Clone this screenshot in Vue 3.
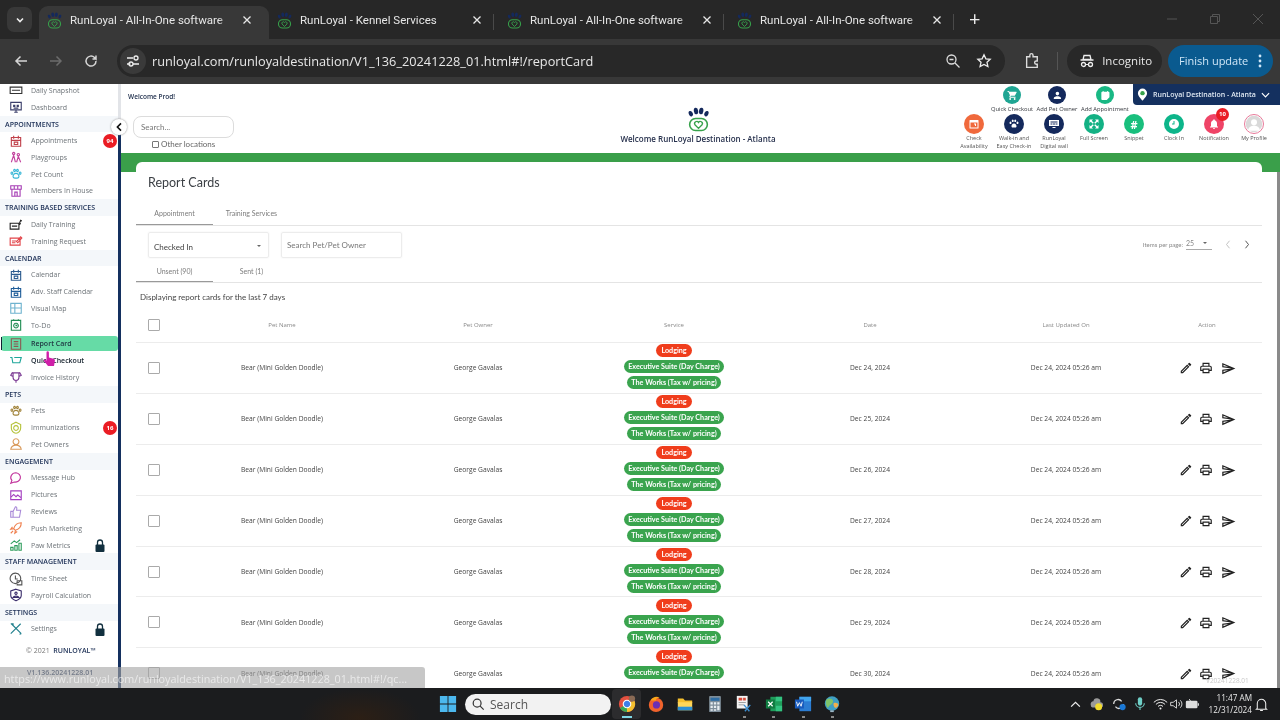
<template>
  <div class="screen">
    <svg class="defs" width="0" height="0">
      <symbol id="paw-logo" viewBox="0 0 24 24">
        <ellipse cx="4.6" cy="6.4" rx="1.9" ry="2.7" fill="#14295c" transform="rotate(-25 4.6 6.4)" />
        <ellipse cx="9.6" cy="3.8" rx="2.1" ry="3.2" fill="#14295c" transform="rotate(-8 9.6 3.8)" />
        <ellipse cx="14.6" cy="3.8" rx="2.1" ry="3.2" fill="#14295c" transform="rotate(8 14.6 3.8)" />
        <ellipse cx="19.6" cy="6.4" rx="1.9" ry="2.7" fill="#14295c" transform="rotate(25 19.6 6.4)" />
        <rect x="3.5" y="11" width="17" height="11.5" rx="5.7" fill="none" stroke="#37a24b" stroke-width="1.5" />
        <path d="M12 20.5l-3.4-3.5a2 2 0 0 1 3.4-2.2 2 2 0 0 1 3.4 2.2z" fill="none" stroke="#37a24b" stroke-width="1.3" />
      </symbol>
    </svg>

    <!-- browser tabs -->
    <div class="tabstrip">
      <div class="tabmenu">
        <svg viewBox="0 0 12 12" width="12" height="12"><path d="M3 4.5l3 3 3-3" fill="none" stroke="#eee" stroke-width="1.6" /></svg>
      </div>
      <div v-for="(tab, i) in tabs" :key="i" class="tab" :class="{ active: i === 0, sep: i > 0 }">
        <svg class="favicon"><use href="#paw-logo" /></svg>
        <span class="tab-title">{{ tab }}</span>
        <svg class="tab-x" viewBox="0 0 10 10" width="10" height="10"><path d="M1.5 1.5l7 7M8.5 1.5l-7 7" stroke="#e8e8e8" stroke-width="1.3" /></svg>
      </div>
      <div class="newtab">+</div>
      <div class="winctl">
        <svg viewBox="0 0 12 12" width="12" height="12"><path d="M1 6h10" stroke="#555" /></svg>
        <svg viewBox="0 0 12 12" width="12" height="12"><path d="M1.5 3.5h7v7h-7zM3.5 3.5v-2h7v7h-2" fill="none" stroke="#555" /></svg>
        <svg viewBox="0 0 12 12" width="12" height="12"><path d="M1 1l10 10M11 1L1 11" stroke="#555" /></svg>
      </div>
    </div>

    <!-- browser toolbar -->
    <div class="toolbar">
      <svg class="nav" viewBox="0 0 16 16"><path d="M14 8H3M7.5 3.5L3 8l4.5 4.5" fill="none" stroke="#d6d6d6" stroke-width="1.5" /></svg>
      <svg class="nav" viewBox="0 0 16 16"><path d="M2 8h11M8.5 3.5L13 8l-4.5 4.5" fill="none" stroke="#6c6c6c" stroke-width="1.5" /></svg>
      <svg class="nav" viewBox="0 0 16 16"><path d="M13 8a5 5 0 1 1-1.5-3.500L13 6V2.500M13 6H9.500" fill="none" stroke="#d6d6d6" stroke-width="1.5" /></svg>
      <div class="omnibox">
        <div class="tune">
          <svg viewBox="0 0 16 16" width="16" height="16"><path d="M2 5h6M2 11h3.500M8 11h6" stroke="#eee" stroke-width="1.3" fill="none" /><circle cx="11" cy="5" r="2" fill="none" stroke="#eee" stroke-width="1.3" /><circle cx="6" cy="11" r="2" fill="none" stroke="#eee" stroke-width="1.3" /></svg>
        </div>
        <span class="url">runloyal.com/runloyaldestination/V1_136_20241228_01.html#!/reportCard</span>
        <svg class="omni-icon zoomglass" viewBox="0 0 16 16"><circle cx="6.500" cy="6.500" r="4.500" fill="none" stroke="#ddd" stroke-width="1.3" /><path d="M10 10l4.500 4.500M4.500 6.500h4" stroke="#ddd" stroke-width="1.3" /></svg>
        <svg class="omni-icon" viewBox="0 0 16 16"><path d="M8 1.800l1.900 4 4.300.5-3.200 3 .9 4.300L8 11.400l-3.900 2.200.9-4.300-3.200-3 4.300-.5z" fill="none" stroke="#eee" stroke-width="1.3" /></svg>
      </div>
      <svg class="puzzle" viewBox="0 0 16 16"><path d="M2.500 4.500h3V3a1.500 1.500 0 0 1 3 0v1.500h4v4h-1a1.500 1.500 0 0 0 0 3h1v3h-10z" fill="none" stroke="#ddd" stroke-width="1.3" /></svg>
      <div class="tool-sep"></div>
      <div class="incognito">
        <svg viewBox="0 0 16 16" width="16" height="16"><path d="M5 2.500h6l1 4H4zM1.500 7h13" fill="none" stroke="#eee" stroke-width="1.3" /><circle cx="4.500" cy="11.500" r="2" fill="none" stroke="#eee" stroke-width="1.3" /><circle cx="11.500" cy="11.500" r="2" fill="none" stroke="#eee" stroke-width="1.3" /><path d="M6.500 11.500h3" stroke="#eee" /></svg>
        <span>Incognito</span>
      </div>
      <div class="update">
        <span>Finish update</span>
        <svg viewBox="0 0 4 16" width="4" height="16"><circle cx="2" cy="3" r="1.4" fill="#cfe6f7" /><circle cx="2" cy="8" r="1.4" fill="#cfe6f7" /><circle cx="2" cy="13" r="1.4" fill="#cfe6f7" /></svg>
      </div>
    </div>

    <!-- application -->
    <div class="app">
      <aside class="sidebar">
        <div class="side-list">
          <template v-for="(group, g) in menu" :key="g">
            <div v-if="group.title" class="side-head">{{ group.title }}</div>
            <div
              v-for="item in group.items"
              :key="item.label"
              class="side-item"
              :class="{ current: item.label === 'Report Card', hovered: item.label === 'Quick Checkout' }">
              <svg class="side-icon" viewBox="0 0 24 24" :style="{ color: item.color }"><path :d="icons[item.icon]" /></svg>
              <span>{{ item.label }}</span>
              <b v-if="item.badge" class="side-badge">{{ item.badge }}</b>
              <svg v-if="item.locked" class="lock" viewBox="0 0 10 13"><path d="M2.500 6V3.500a2.500 2.500 0 0 1 5 0V6" fill="none" stroke="#12303f" stroke-width="1.3" /><rect x="0.5" y="5.500" width="9" height="7.500" rx="1" fill="#12303f" /></svg>
            </div>
          </template>
          <div class="side-copy">© 2021 &nbsp;<b>RUNLOYAL™</b></div>
          <div class="side-version">V1.136.20241228.01</div>
        </div>
      </aside>

      <main class="main">
        <header class="topbar">
          <div class="top-left">
            <div class="welcome">Welcome Prod!</div>
            <div class="global-search">Search...</div>
            <label class="other"><i></i>Other locations</label>
          </div>
          <div class="top-center">
            <svg class="top-logo"><use href="#paw-logo" /></svg>
            <div class="top-title">Welcome RunLoyal Destination - Atlanta</div>
          </div>
          <div class="top-right">
            <div class="quick-row">
              <div v-for="q in quickActions" :key="q.label" class="quick" :style="{ width: q.width + 'px' }">
                <span class="round" :style="{ background: q.color }"><svg viewBox="0 0 24 24"><path :d="glyphs[q.icon]" /></svg></span>
                <small>{{ q.label }}</small>
              </div>
              <div class="location">
                <svg viewBox="0 0 12 14" width="11" height="13"><path d="M6 .5a5 5 0 0 0-5 5c0 3.500 5 8 5 8s5-4.500 5-8a5 5 0 0 0-5-5z" fill="#fff" /><circle cx="6" cy="5.500" r="2.400" fill="#37a24b" /></svg>
                <span>RunLoyal Destination - Atlanta</span>
                <svg viewBox="0 0 10 6" width="9" height="6"><path d="M1 1l4 4 4-4" fill="none" stroke="#fff" stroke-width="1.3" /></svg>
              </div>
            </div>
            <div class="tool-row">
              <div v-for="t in tools" :key="t.label" class="tool-item">
                <span class="round" :class="{ profile: t.profile }" :style="{ background: t.color }">
                  <svg v-if="t.icon" viewBox="0 0 24 24"><path :d="glyphs[t.icon]" /></svg>
                  <b v-if="t.text">{{ t.text }}</b>
                  <svg v-if="t.profile" viewBox="0 0 24 24" class="avatar"><circle cx="12" cy="12" r="11" fill="#d9d9d9" /><circle cx="12" cy="9.500" r="4" fill="#fff" /><path d="M4 21a8 7 0 0 1 16 0z" fill="#fff" /></svg>
                  <em v-if="t.badge">{{ t.badge }}</em>
                </span>
                <small>{{ t.label }}</small>
              </div>
            </div>
          </div>
        </header>

        <div class="content">
          <section class="card">
            <h1>Report Cards</h1>
            <div class="tabs">
              <span class="on">Appointment</span>
              <span>Training Services</span>
            </div>
            <div class="filters">
              <div class="field select">Checked In<i></i></div>
              <div class="field">Search Pet/Pet Owner</div>
              <div class="pager">
                <span class="pager-label">Items per page:</span>
                <span class="pager-size">25<i></i></span>
                <svg viewBox="0 0 8 12" width="6" height="9"><path d="M6 1L2 6l4 5" fill="none" stroke="#bbb" stroke-width="1.2" /></svg>
                <svg viewBox="0 0 8 12" width="6" height="9"><path d="M2 1l4 5-4 5" fill="none" stroke="#444" stroke-width="1.2" /></svg>
              </div>
            </div>
            <div class="tabs sub">
              <span class="on">Unsent (90)</span>
              <span>Sent (1)</span>
            </div>
            <p class="note">Displaying report cards for the last 7 days</p>

            <div class="row head">
              <div><span class="check"></span></div>
              <div>Pet Name</div>
              <div>Pet Owner</div>
              <div>Service</div>
              <div>Date</div>
              <div>Last Updated On</div>
              <div class="act-cell">Action</div>
            </div>
            <div v-for="date in dates" :key="date" class="row">
              <div><span class="check"></span></div>
              <div>Bear (Mini Golden Doodle)</div>
              <div>George Gavalas</div>
              <div class="services">
                <span class="pill red">Lodging</span>
                <span class="pill">Executive Suite (Day Charge)</span>
                <span class="pill">The Works (Tax w/ pricing)</span>
              </div>
              <div>{{ date }}</div>
              <div>Dec 24, 2024 05:26 am</div>
              <div class="act-cell actions">
                <svg viewBox="0 0 24 24"><path d="M3 17.250V21h3.750L17.810 9.940l-3.750-3.750L3 17.250zM5.920 19H5v-.92l9.060-9.060.92.92L5.920 19zM20.710 5.630l-2.340-2.340a1 1 0 0 0-1.410 0l-1.830 1.830 3.750 3.750 1.830-1.830a1 1 0 0 0 0-1.410z" /></svg>
                <svg viewBox="0 0 24 24"><path d="M19 8h-1V3H6v5H5c-1.660 0-3 1.340-3 3v6h4v4h12v-4h4v-6c0-1.660-1.340-3-3-3zM8 5h8v3H8V5zm8 14H8v-4h8v4zm2-4v-2H6v2H4v-4c0-.55.45-1 1-1h14c.55 0 1 .45 1 1v4h-2z" /></svg>
                <svg viewBox="0 0 24 24" class="send"><path d="M4.010 6.030l7.510 3.220-7.520-1 .01-2.220m7.500 8.720L4 17.970v-2.220l7.510-1M2.010 3L2 10l15 2-15 2 .01 7L23 12 2.010 3z" /></svg>
              </div>
            </div>
          </section>
        </div>
      </main>

      <!-- overlays -->
      <button class="collapse">
        <svg viewBox="0 0 10 12" width="8" height="10"><path d="M7.500 1.500L3 6l4.500 4.500" fill="none" stroke="#111" stroke-width="2" /></svg>
      </button>
      <div class="scrollbar"></div>
      <div class="build">V20241228.01</div>
      <div class="status">https://www.runloyal.com/runloyaldestination/V1_136_20241228_01.html#!/qc...</div>
      <svg class="pointer" viewBox="0 0 12 16"><path d="M3.500 1a1.200 1.200 0 0 1 2.400 0v5l4.600 1.300c1 .3 1.500 1 1.400 2L11 14.500H5L1 9.500c-.7-1 .5-2 1.400-1.300l1.100 1z" fill="#cf1fa8" /></svg>
    </div>

    <!-- windows taskbar -->
    <div class="taskbar">
      <svg class="win" viewBox="0 0 20 20"><path d="M1 1h8.500v8.500H1zM10.500 1H19v8.500h-8.500zM1 10.500h8.500V19H1zM10.500 10.500H19V19h-8.500z" fill="#4cb8ee" /></svg>
      <div class="task-search">
        <svg viewBox="0 0 16 16" width="14" height="14"><circle cx="7" cy="7" r="4.500" fill="none" stroke="#333" stroke-width="1.4" /><path d="M10.500 10.500l4 4" stroke="#333" stroke-width="1.4" /></svg>
        <span>Search</span>
      </div>
      <div class="task-apps">
        <div class="app-slot chrome">
          <svg viewBox="0 0 20 20"><circle cx="10" cy="10" r="9" fill="#e3503f" /><path d="M10 10L2.200 14.500A9 9 0 0 0 10 19z" fill="#39a853" /><path d="M10 10l7.800-4.500A9 9 0 0 1 10 19z" fill="#f5c02f" /><circle cx="10" cy="10" r="4.200" fill="#3f7fe8" stroke="#fff" stroke-width="1.2" /><circle cx="15.500" cy="4" r="3.500" fill="#8a6a55" /></svg>
        </div>
        <div class="app-slot">
          <svg viewBox="0 0 20 20"><circle cx="10" cy="11" r="8" fill="#f0632c" /><circle cx="10.500" cy="11" r="4" fill="#6b2fb5" /><path d="M4 6c2-4 7-5 10-3-3 0-4 1-4 3z" fill="#f9a61a" /></svg>
        </div>
        <div class="app-slot">
          <svg viewBox="0 0 20 20"><path d="M2 4h6l2 2h8v3H2z" fill="#f6bf2e" /><path d="M2 8h16v9H2z" fill="#ffd65a" /><path d="M2 13h16v4H2z" fill="#2d8fd5" /></svg>
        </div>
        <div class="app-slot">
          <svg viewBox="0 0 20 20"><rect x="3.500" y="1" width="13" height="18" rx="1" fill="#7e8d99" /><rect x="5" y="3" width="10" height="3.500" fill="#2f6ea5" /><path d="M5 8h2.500v2.500H5zM8.800 8h2.500v2.500H8.800zM12.500 8H15v2.500h-2.500zM5 12h2.500v2.500H5zM8.800 12h2.500v2.500H8.800zM12.500 12H15v5h-2.500zM5 15.800h2.500v1.700H5zM8.800 15.800h2.500v1.700H8.800z" fill="#e7edf1" /></svg>
        </div>
        <div class="app-slot open">
          <svg viewBox="0 0 20 20"><rect x="2" y="1" width="12" height="14" fill="#f3f3f3" /><path d="M4 3h4v3H4zM9 3h3v3H9z" fill="#d74b3a" /><path d="M4 8h8v1H4zM4 10.500h6v1H4z" fill="#888" /><path d="M10 11l6 7M17 11l-6 7" stroke="#3c8fd1" stroke-width="1.5" /></svg>
        </div>
        <div class="app-slot open">
          <svg viewBox="0 0 20 20"><rect x="6" y="2" width="13" height="16" fill="#1f9d5b" /><path d="M12 2h7v5h-7zM12 12h7v6h-7z" fill="#33c481" /><rect x="1" y="5" width="10" height="10" fill="#107c41" /><path d="M3.500 7.500l5 5M8.500 7.500l-5 5" stroke="#fff" stroke-width="1.3" /></svg>
        </div>
        <div class="app-slot open">
          <svg viewBox="0 0 20 20"><rect x="6" y="2" width="13" height="16" fill="#2b7cd3" /><path d="M6 2h13v5H6z" fill="#41a5ee" /><rect x="1" y="5" width="10" height="10" fill="#185abd" /><path d="M2.800 7.500l1.300 5 1.900-4 1.900 4 1.300-5" fill="none" stroke="#fff" stroke-width="1" /></svg>
        </div>
        <div class="app-slot open">
          <svg viewBox="0 0 20 20"><circle cx="10" cy="9.500" r="8" fill="#3f9fc4" /><path d="M4 5c3-2 6-1 7 1s-1 4-3 5-2 4-3 3-3-6-1-9z" fill="#7ec46b" /><path d="M12 9c2-1 5 0 5 2s-3 4-4 3-2-4-1-5z" fill="#f2b04b" /><path d="M8 17h4v2H8z" fill="#9bb6c6" /></svg>
        </div>
      </div>
      <div class="tray">
        <svg viewBox="0 0 12 8" width="11" height="7"><path d="M1 6.500l5-5 5 5" fill="none" stroke="#eee" stroke-width="1.4" /></svg>
        <svg viewBox="0 0 18 16" width="16" height="14"><path d="M3 9a3 3 0 0 1 3-4 4 4 0 0 1 8 1 3 3 0 0 1 0 6H5a3 3 0 0 1-2-3z" fill="#9a9a9a" /><circle cx="12" cy="11" r="4" fill="#f2dc2e" /></svg>
        <svg viewBox="0 0 18 18" width="16" height="16"><path d="M3 9a5 5 0 0 1 9-3M14 9a5 5 0 0 1-9 3" fill="none" stroke="#ddd" stroke-width="1.4" /><circle cx="13" cy="12.500" r="3.500" fill="#1a78d6" /></svg>
        <svg viewBox="0 0 14 18" width="12" height="16"><rect x="4.500" y="1" width="5" height="10" rx="2.500" fill="#6fd0c8" /><path d="M2 8a5 5 0 0 0 10 0M7 13v3" fill="none" stroke="#6fd0c8" stroke-width="1.3" /></svg>
        <svg viewBox="0 0 18 14" width="15" height="12"><path d="M1 5a11 11 0 0 1 16 0M3.500 7.500a7.500 7.500 0 0 1 11 0M6 10a4 4 0 0 1 6 0" fill="none" stroke="#eee" stroke-width="1.2" /><circle cx="9" cy="12.300" r="1.200" fill="#eee" /></svg>
        <svg class="tight" viewBox="0 0 18 14" width="15" height="12"><path d="M2 5h3l4-3v10l-4-3H2zM11.500 4.500a3.500 3.500 0 0 1 0 5M13.500 2.500a6 6 0 0 1 0 9" fill="none" stroke="#ddd" stroke-width="1.1" /></svg>
        <svg class="tight" viewBox="0 0 18 14" width="15" height="12"><rect x="1" y="3" width="14" height="9" rx="1.500" fill="#ddd" /><path d="M16 6v3" stroke="#ddd" stroke-width="1.5" /><path d="M5 1l2 3" stroke="#eee" /></svg>
        <div class="clock">11:47 AM<br />12/31/2024</div>
        <svg viewBox="0 0 16 16" width="15" height="15"><path d="M3.500 12V7a4.500 4.500 0 0 1 9 0v5l1 1h-11zM6.500 14.500h3" fill="none" stroke="#eee" stroke-width="1.1" /></svg>
      </div>
    </div>
  </div>
</template>

<script setup>
const tabs = [
  'RunLoyal - All-In-One software',
  'RunLoyal - Kennel Services',
  'RunLoyal - All-In-One software',
  'RunLoyal - All-In-One software',
];

const icons = {
  today: 'M2 7h20v11H2zM5 12.500h14',
  monitor: 'M3 4h18v13H3zM9 21h6M12 17v4M8 9h2v2H8zM14 9h2v2h-2zM8 14h8',
  cal: 'M4 6h16v15H4zM4 11h16M8 3v5M16 3v5M9 14h6v4H9z',
  figures: 'M8 4a2 2 0 1 0 .01 0M16 6a2 2 0 1 0 .01 0M4 21l4-12 3 12M13 21l3-10 4 10',
  paw: 'M12 11c-3 0-5.500 3-5 6s3.500 2 5 2 4.500 1 5-2-2-6-5-6zM5 8.500a1.500 2 0 1 0 .01 0M9.500 4a1.500 2 0 1 0 .01 0M14.500 4a1.500 2 0 1 0 .01 0M19 8.500a1.500 2 0 1 0 .01 0',
  store: 'M3 3h18v6H3zM5 9v12h14V9M10 21v-7h4v7M9 3v6M15 3v6',
  train: 'M2 9h15v10H2zM5 14h9M18 9l2-5 2 1M17 12l3-3',
  request: 'M2 7h17v12H2zM5 12h8M5 15h6M13 13l7-8 2 2-7 8z',
  grid: 'M3 4h18v17H3zM3 12h18M10 4v17',
  todo: 'M4 4h16v17H4zM8 2v3M16 2v3M12 9a4 4 0 1 0 .01 0M12 11v2h2',
  report: 'M4 3h16v18H4zM8 8h8M8 12h8M8 16h8',
  cart: 'M2 6h3l1.500 9h12L21 6H9M8 20h.01M17 20h.01',
  dog: 'M6 4l-3 5 4 2M18 4l3 5-4 2M7 5h10v8a5 5 0 0 1-10 0zM10 10h.01M14 10h.01M12 18v4',
  target: 'M12 2l8 4v6a8 9 0 0 1-16 0V6zM12 8a4 4 0 1 0 .01 0',
  person: 'M12 3a5 5 0 1 0 .01 0M3 21c1-5 5-7 9-7s8 2 9 7z',
  bubble: 'M12 3a9 8 0 0 0-7 13l-2 5 6-2a9 8 0 1 0 3-16zM8 11.500h.01M12 11.500h.01M16 11.500h.01',
  image: 'M3 5h18v15H3zM3 16l5-5 4 4 3-3 6 5M16 8h.01',
  thumb: 'M3 11h4v10H3zM7 11l4-8c2 0 3 1 2 6h7l-2 12H7',
  rocket: 'M21 3c-6 0-11 4-13 10l3 3c6-2 10-7 10-13zM8 13l-5 1 3-4M11 16l-1 5 4-3M3 21l4-4',
  metrics: 'M3 21v-5h4v5zM10 21v-8h4v8zM17 21V9h4v12zM3 10l6-5 4 3 6-5',
  clock: 'M11 2a9 9 0 1 0 .01 0M11 6v6h4M14 15h8v7h-8z',
  shield: 'M12 2l9 3v8c0 5-4 7-9 9-5-2-9-4-9-9V5zM12 7a2 2 0 1 0 .01 0M7 16c1-3 9-3 10 0z',
  tools: 'M4 3l17 17M20 3L3 20M3 3l4 0 0 4M21 20l-3 1',
};

const menu = [
  {
    items: [
      { label: 'Daily Snapshot', icon: 'today', color: '#333' },
      { label: 'Dashboard', icon: 'monitor', color: '#3b3f6b' },
    ],
  },
  {
    title: 'APPOINTMENTS',
    items: [
      { label: 'Appointments', icon: 'cal', color: '#c0404a', badge: 94 },
      { label: 'Playgroups', icon: 'figures', color: '#c2409c' },
      { label: 'Pet Count', icon: 'paw', color: '#35b6d6' },
      { label: 'Members In House', icon: 'store', color: '#a63fb5' },
    ],
  },
  {
    title: 'TRAINING BASED SERVICES',
    items: [
      { label: 'Daily Training', icon: 'train', color: '#222' },
      { label: 'Training Request', icon: 'request', color: '#e2454a' },
    ],
  },
  {
    title: 'CALENDAR',
    items: [
      { label: 'Calendar', icon: 'cal', color: '#2c5b8f' },
      { label: 'Adv. Staff Calendar', icon: 'cal', color: '#1f5d99' },
      { label: 'Visual Map', icon: 'grid', color: '#6fb3cf' },
      { label: 'To-Do', icon: 'todo', color: '#1f8c52' },
      { label: 'Report Card', icon: 'report', color: '#8a5a52' },
      { label: 'Quick Checkout', icon: 'cart', color: '#1ea69a' },
      { label: 'Invoice History', icon: 'dog', color: '#7b3a94' },
    ],
  },
  {
    title: 'PETS',
    items: [
      { label: 'Pets', icon: 'paw', color: '#a08238' },
      { label: 'Immunizations', icon: 'target', color: '#b5c23a', badge: 16 },
      { label: 'Pet Owners', icon: 'person', color: '#d99a5b' },
    ],
  },
  {
    title: 'ENGAGEMENT',
    items: [
      { label: 'Message Hub', icon: 'bubble', color: '#c2349c' },
      { label: 'Pictures', icon: 'image', color: '#a43fc0' },
      { label: 'Reviews', icon: 'thumb', color: '#a98ad8' },
      { label: 'Push Marketing', icon: 'rocket', color: '#ef7f4d' },
      { label: 'Paw Metrics', icon: 'metrics', color: '#2f9d5d', locked: true },
    ],
  },
  {
    title: 'STAFF MANAGEMENT',
    items: [
      { label: 'Time Sheet', icon: 'clock', color: '#555' },
      { label: 'Payroll Calculation', icon: 'shield', color: '#3a2d6b' },
    ],
  },
  {
    title: 'SETTINGS',
    items: [{ label: 'Settings', icon: 'tools', color: '#1f7f8c', locked: true }],
  },
];

const glyphs = {
  cart: 'M7 18a2 2 0 1 0 0 4 2 2 0 0 0 0-4zM1 2v2h2l3.600 7.590-1.350 2.450C5 15.400 6 17 7 17h12v-2H7.420l1.100-2h7.450c.75 0 1.410-.41 1.750-1.030l3.580-6.490A1 1 0 0 0 20 4H5.210l-.94-2H1zm16 16a2 2 0 1 0 0 4 2 2 0 0 0 0-4z',
  person: 'M12 12a4 4 0 1 0 0-8 4 4 0 0 0 0 8zm0 2c-2.670 0-8 1.340-8 4v2h16v-2c0-2.660-5.330-4-8-4z',
  cal: 'M19 4h-1V2h-2v2H8V2H6v2H5a2 2 0 0 0-2 2v14a2 2 0 0 0 2 2h10l6-6V6a2 2 0 0 0-2-2z',
  check: 'M4 4h16a1 1 0 0 1 1 1v15a1 1 0 0 1-1 1H4a1 1 0 0 1-1-1V5a1 1 0 0 1 1-1zm1 5v10h14V9zm7 2h4v5h-2v-3h-2z',
  paw: 'M12 11c-3 0-5.500 3-5 6s3.500 2 5 2 4.500 1 5-2-2-6-5-6zM5 7a2 2.500 0 1 0 .01 0zM9.500 3a2 2.500 0 1 0 .01 0zM14.500 3a2 2.500 0 1 0 .01 0zM19 7a2 2.500 0 1 0 .01 0z',
  wall: 'M2 4h20v12H2zM5 7v2h14V7zM5 11v2h4v-2zM10 11v2h4v-2zM15 11v2h4v-2zM9 18h6v2H9z',
  full: 'M3 3h7L7.500 5.500l4 4-2 2-4-4L3 10zM21 3v7l-2.500-2.500-4 4-2-2 4-4L14 3zM3 21v-7l2.500 2.500 4-4 2 2-4 4L10 21zM21 21h-7l2.500-2.500-4-4 2-2 4 4L21 14z',
  clock: 'M12 2a10 10 0 1 0 0 20 10 10 0 0 0 0-20zm1 11H8v-2h3V6h2z',
  bell: 'M12 22a2 2 0 0 0 2-2h-4a2 2 0 0 0 2 2zm6-6v-5c0-3.070-1.630-5.640-4.500-6.320V4a1.500 1.500 0 0 0-3 0v.68C7.640 5.360 6 7.920 6 11v5l-2 2v1h16v-1z',
};

const quickActions = [
  { label: 'Quick Checkout', icon: 'cart', color: '#1fa593', width: 44 },
  { label: 'Add Pet Owner', icon: 'person', color: '#14295c', width: 46 },
  { label: 'Add Appointment', icon: 'cal', color: '#19b884', width: 50 },
];

const tools = [
  { label: 'Check\nAvailability', icon: 'check', color: '#f0693c' },
  { label: 'Walk-in and\nEasy Check-in', icon: 'paw', color: '#14295c' },
  { label: 'RunLoyal\nDigital wall', icon: 'wall', color: '#14295c' },
  { label: 'Full Screen', icon: 'full', color: '#13b184' },
  { label: 'Snippet', text: '#', color: '#19bf7d' },
  { label: 'Clock In', icon: 'clock', color: '#0db58a' },
  { label: 'Notification', icon: 'bell', color: '#ef4467', badge: 10 },
  { label: 'My Profile', color: '#fff', profile: true },
];

const dates = [
  'Dec 24, 2024',
  'Dec 25, 2024',
  'Dec 26, 2024',
  'Dec 27, 2024',
  'Dec 28, 2024',
  'Dec 29, 2024',
  'Dec 30, 2024',
];
</script>

<style>
html,
body {
  margin: 0;
  overflow: hidden;
  background: #fff;
}
</style>

<style scoped>
.screen {
  width: 1280px;
  height: 720px;
  display: flex;
  flex-direction: column;
  overflow: hidden;
  font-family: "Open Sans", sans-serif;
  filter: blur(0.4px);
}
.defs {
  position: absolute;
}

/* browser chrome */
.tabstrip {
  height: 39px;
  flex: none;
  display: flex;
  align-items: flex-end;
  background: #272727;
  padding-left: 7px;
  box-sizing: border-box;
}
.tabmenu {
  align-self: flex-start;
  margin-top: 7px;
  width: 25px;
  height: 25px;
  margin-right: 7px;
  border-radius: 7px;
  background: #383838;
  display: flex;
  align-items: center;
  justify-content: center;
}
.tab {
  position: relative;
  width: 230px;
  height: 33px;
  box-sizing: border-box;
  padding: 0 8px 5px 7px;
  display: flex;
  align-items: center;
  color: #e6e6e6;
  font-family: Roboto, sans-serif;
  font-size: 11.5px;
  border-radius: 9px 9px 0 0;
}
.tab.active {
  background: #383838;
}
.tab.sep::after {
  content: "";
  position: absolute;
  right: 5px;
  top: 8px;
  height: 16px;
  border-right: 1px solid #4a4a4a;
}
.favicon {
  width: 17px;
  height: 17px;
  flex: none;
  margin-right: 7px;
}
.tab-title {
  flex: 1;
  white-space: nowrap;
  overflow: hidden;
  -webkit-mask-image: linear-gradient(to right, #000 148px, transparent 162px);
  mask-image: linear-gradient(to right, #000 148px, transparent 162px);
}
.tab-x {
  flex: none;
  margin-left: 6px;
  margin-right: 9px;
}
.newtab {
  align-self: flex-start;
  margin: 8px 0 0 10px;
  color: #eee;
  font-size: 20px;
  line-height: 22px;
}
.winctl {
  margin-left: auto;
  align-self: flex-start;
  display: flex;
  gap: 31px;
  margin-top: 13px;
  margin-right: 16px;
}

.toolbar {
  height: 45px;
  flex: none;
  display: flex;
  align-items: center;
  background: #383838;
  padding: 0 7px 2px 13px;
  box-sizing: border-box;
}
.nav {
  width: 16px;
  height: 16px;
  margin-right: 19px;
}
.omnibox {
  width: 889px;
  height: 32px;
  margin-left: -1px;
  box-sizing: border-box;
  background: #282828;
  border-radius: 16px;
  display: flex;
  align-items: center;
  padding: 0 13px 0 3px;
}
.tune {
  width: 26px;
  height: 26px;
  border-radius: 50%;
  background: #3a3a3a;
  display: flex;
  align-items: center;
  justify-content: center;
  margin-right: 6px;
}
.url {
  flex: 1;
  color: #e8e8e8;
  font-size: 12.75px;
  white-space: nowrap;
}
.omni-icon {
  width: 16px;
  height: 16px;
}
.zoomglass {
  margin-right: 15px;
}
.puzzle {
  width: 17px;
  height: 17px;
  margin-left: 19px;
}
.tool-sep {
  width: 1px;
  height: 18px;
  background: #555;
  margin: 0 9px 0 16px;
}
.incognito {
  width: 95px;
  height: 32px;
  box-sizing: border-box;
  border-radius: 16px;
  background: #282828;
  color: #e6e6e6;
  font-size: 11.5px;
  display: flex;
  align-items: center;
  gap: 7px;
  padding-left: 12px;
}
.update {
  margin-left: 6px;
  width: 105px;
  height: 32px;
  box-sizing: border-box;
  border-radius: 16px;
  background: #0a5a8f;
  color: #cfe6f7;
  font-size: 11px;
  display: flex;
  align-items: center;
  justify-content: space-between;
  padding: 0 11px;
  white-space: nowrap;
}

/* app frame */
.app {
  position: relative;
  height: 604px;
  flex: none;
  display: flex;
  background: #fff;
  overflow: hidden;
}
.sidebar {
  width: 121px;
  flex: none;
  box-sizing: border-box;
  border-right: 3px solid;
  border-image: linear-gradient(#e2e4e8 42px, #14305f 42px) 1;
  overflow: hidden;
}
.side-list {
  margin-top: -2px;
}
.side-head {
  height: 16.78px;
  line-height: 18.5px;
  padding-left: 5px;
  font-size: 7px;
  font-weight: 600;
  color: #1c2f55;
  background: #f4f7fa;
  white-space: nowrap;
  overflow: hidden;
}
.side-item {
  position: relative;
  height: 16.78px;
  display: flex;
  align-items: center;
  padding-left: 9px;
  font-size: 7px;
  color: #6d7378;
  box-sizing: border-box;
  white-space: nowrap;
}
.side-item.current {
  height: 14.78px;
  margin: 3px 0 1px 1px;
  padding-left: 8px;
  background: #66dba6;
  color: #1e3340;
  font-weight: 600;
  border-radius: 3px;
}
.side-item.current::before {
  content: "";
  position: absolute;
  left: 0;
  top: 1px;
  bottom: 1px;
  border-left: 1px solid #123;
}
.side-item.hovered {
  color: #14202c;
  font-weight: 600;
}
.side-icon {
  width: 14px;
  height: 14px;
  flex: none;
  margin-right: 8px;
  fill: none;
  stroke: currentColor;
  stroke-width: 1.9;
}
.side-badge {
  position: absolute;
  right: 1px;
  top: 1.5px;
  width: 14px;
  height: 14px;
  border-radius: 50%;
  background: #ea1c24;
  color: #fff;
  font-size: 6px;
  line-height: 14px;
  text-align: center;
}
.lock {
  position: absolute;
  right: 13px;
  top: 2px;
  width: 10px;
  height: 13px;
}
.side-copy {
  margin-top: 3px;
  height: 22px;
  padding-left: 26px;
  font-size: 7px;
  line-height: 22px;
  color: #777;
}
.side-copy b {
  color: #1c2f55;
  font-weight: 600;
}
.side-version {
  margin-top: 0;
  padding-left: 27px;
  font-size: 7px;
  line-height: 22px;
  font-weight: 600;
  color: #1c2f55;
}

/* main header */
.main {
  flex: 1;
  min-width: 0;
  display: flex;
  flex-direction: column;
}
.topbar {
  height: 69px;
  flex: none;
  display: flex;
  position: relative;
  box-sizing: border-box;
}
.top-left {
  width: 220px;
  padding: 8px 0 0 7px;
  box-sizing: border-box;
}
.welcome {
  font-size: 6.5px;
  line-height: 9px;
  font-weight: 600;
  color: #1b2b49;
}
.global-search {
  width: 101px;
  height: 22px;
  margin: 15px 0 0 5px;
  box-sizing: border-box;
  border: 1px solid #dcdcdc;
  border-radius: 8px;
  padding-left: 7px;
  font-family: Lato, sans-serif;
  font-size: 8px;
  line-height: 20px;
  color: #777;
}
.other {
  display: flex;
  align-items: center;
  gap: 2px;
  margin: 1px 0 0 24px;
  font-family: Lato, sans-serif;
  font-size: 8px;
  line-height: 11px;
  color: #666;
}
.other i {
  width: 5px;
  height: 5px;
  border: 1px solid #777;
  border-radius: 1px;
}
.top-center {
  width: 314px;
  margin-left: 200px;
  display: flex;
  flex-direction: column;
  align-items: center;
  padding-top: 23px;
  box-sizing: border-box;
}
.top-logo {
  width: 25px;
  height: 25px;
}
.top-title {
  margin-top: 1px;
  font-size: 8px;
  line-height: 12px;
  font-weight: 600;
  color: #26304c;
  white-space: nowrap;
}
.top-right {
  flex: 1;
  display: flex;
  flex-direction: column;
  align-items: flex-end;
}
.quick-row {
  display: flex;
  height: 29px;
}
.quick {
  display: flex;
  flex-direction: column;
  align-items: center;
  padding-top: 2px;
  box-sizing: border-box;
}
.quick .round {
  width: 18px;
  height: 18px;
}
.quick small {
  margin-top: 1px;
  font-size: 5.8px;
  line-height: 9px;
  color: #33363c;
  white-space: nowrap;
}
.round {
  position: relative;
  width: 20px;
  height: 20px;
  border-radius: 50%;
  display: flex;
  align-items: center;
  justify-content: center;
  flex: none;
}
.round svg {
  width: 60%;
  height: 60%;
  fill: #fff;
}
.round b {
  color: #fff;
  font-size: 11px;
  line-height: 1;
}
.round em {
  position: absolute;
  right: -5px;
  top: -6px;
  width: 13px;
  height: 13px;
  border-radius: 50%;
  background: #ea1c24;
  color: #fff;
  font-style: normal;
  font-weight: 700;
  font-size: 6px;
  line-height: 13px;
  text-align: center;
}
.round.profile {
  box-sizing: border-box;
  border: 1.5px solid #e87a9a;
}
.round.profile .avatar {
  width: 100%;
  height: 100%;
}
.location {
  width: 147px;
  height: 21px;
  margin-left: 3px;
  box-sizing: border-box;
  padding: 0 10px 0 4px;
  display: flex;
  align-items: center;
  gap: 5px;
  background: #14305f;
  border-bottom-left-radius: 4px;
  color: #dfe8f2;
  font-size: 7px;
  font-weight: 600;
  white-space: nowrap;
}
.location svg {
  flex: none;
}
.location svg:last-child {
  margin-left: auto;
}
.tool-row {
  display: flex;
  margin-right: 6px;
  margin-top: 1px;
}
.tool-item {
  width: 40px;
  display: flex;
  flex-direction: column;
  align-items: center;
  text-align: center;
}
.tool-item small {
  margin-top: 1px;
  font-size: 5.5px;
  line-height: 7.5px;
  color: #555;
  white-space: pre-line;
}

/* content */
.content {
  flex: 1;
  min-height: 0;
  padding: 9px 18px 8px 15px;
  background: linear-gradient(#3a9f4a 19px, #fff 19px);
}
.card {
  height: 100%;
  background: #fff;
  border-radius: 6px 6px 0 0;
  font-family: Lato, sans-serif;
  overflow: hidden;
}
.card h1 {
  margin: 0;
  height: 43px;
  padding: 9px 0 0 12px;
  box-sizing: border-box;
  font-size: 12.5px;
  font-weight: 400;
  line-height: 24px;
  color: #3b3f44;
}
.tabs {
  height: 20px;
  display: flex;
  border-bottom: 1px solid #e4e4e4;
  font-size: 7px;
  color: #7c7c7c;
  margin-top: 0;
}
.tabs span {
  width: 77px;
  text-align: center;
  line-height: 16px;
  height: 20px;
  box-sizing: border-box;
}
.tabs span.on {
  border-bottom: 1px solid #999;
}
.filters {
  display: flex;
  align-items: center;
  height: 38px;
  padding: 0 12px;
  gap: 12px;
}
.field {
  width: 121px;
  height: 26px;
  box-sizing: border-box;
  border: 1px solid #ececec;
  border-radius: 2px;
  box-shadow: 0 0 2px #eee;
  padding-left: 5px;
  font-size: 8px;
  line-height: 25px;
  color: #777;
}
.select {
  position: relative;
  color: #444;
  line-height: 28px;
}
.select i,
.pager-size i {
  position: absolute;
  right: 7px;
  top: 12px;
  border: 2px solid transparent;
  border-top: 2.5px solid #666;
  border-bottom: 0;
}
.pager {
  margin-left: auto;
  display: flex;
  align-items: center;
  font-size: 6px;
  color: #888;
  gap: 3px;
  padding-bottom: 2px;
}
.pager-size {
  position: relative;
  width: 26px;
  height: 10px;
  font-size: 7px;
  line-height: 9px;
  border-bottom: 1px solid #aaa;
  margin-right: 10px;
}
.pager-size i {
  right: 5px;
  top: 3px;
}
.pager svg + svg {
  margin-left: 10px;
}
.sub {
  height: 18px;
}
.sub span {
  height: 18px;
  line-height: 14px;
}
.note {
  margin: 0;
  height: 26px;
  padding-left: 4px;
  font-size: 8px;
  line-height: 28px;
  color: #444;
}
.row {
  display: grid;
  grid-template-columns: 48px repeat(5, 196px) 98px;
  align-items: center;
  height: 50.9px;
  box-sizing: border-box;
  border-bottom: 1px solid #ececec;
  font-family: "Open Sans", sans-serif;
  font-size: 6.7px;
  color: #444;
  text-align: center;
}
.row.head {
  height: 34px;
  padding-bottom: 2px;
  color: #888;
  font-size: 6px;
}
.check {
  display: block;
  width: 10px;
  height: 10px;
  margin-left: 12px;
  border: 1px solid #aaa;
  border-radius: 1px;
}
.services {
  display: flex;
  flex-direction: column;
  align-items: center;
  gap: 3px;
  margin-top: -2px;
  font-family: Lato, sans-serif;
}
.pill {
  height: 13px;
  padding: 0 4px;
  border-radius: 7px;
  background: #3aa44e;
  color: #fff;
  font-size: 7.2px;
  font-weight: 700;
  line-height: 13px;
  white-space: nowrap;
}
.pill.red {
  padding: 0 5px;
  background: #f03d1c;
}
.act-cell {
  padding-right: 12px;
}
.actions {
  display: flex;
  align-items: center;
  justify-content: center;
  gap: 6px;
  padding-top: 1px;
}
.actions svg {
  width: 14px;
  height: 14px;
  fill: #222;
}
.actions .send {
  margin-left: 2px;
  width: 15px;
  height: 15px;
}

/* overlays */
.collapse {
  position: absolute;
  left: 111px;
  top: 35px;
  width: 16px;
  height: 16px;
  padding: 0;
  border: 0;
  border-radius: 50%;
  background: #fff;
  box-shadow: 0 0 2px #888;
  display: flex;
  align-items: center;
  justify-content: center;
}
.scrollbar {
  position: absolute;
  right: 0;
  top: 88px;
  bottom: 0;
  width: 3px;
  background: #8a8a8a;
}
.build {
  position: absolute;
  left: 1206px;
  top: 592px;
  font-size: 6.5px;
  color: #c9c9c9;
}
.status {
  position: absolute;
  left: 0;
  bottom: 0;
  width: 425px;
  height: 21px;
  box-sizing: border-box;
  padding-left: 4px;
  background: rgba(165, 165, 165, 0.62);
  border-top-right-radius: 3px;
  color: rgba(255, 255, 255, 0.62);
  font-size: 10.8px;
  line-height: 23px;
  white-space: nowrap;
  overflow: hidden;
}
.pointer {
  position: absolute;
  left: 43px;
  top: 267px;
  width: 12px;
  height: 17px;
}

/* taskbar */
.taskbar {
  height: 32px;
  flex: none;
  position: relative;
  display: flex;
  align-items: center;
  padding-left: 439px;
  box-sizing: border-box;
  background: radial-gradient(ellipse 60px 30px at 360px 30px, #2c1f15, transparent), #1b1c1e;
}
.win {
  width: 18px;
  height: 18px;
  margin-right: 8px;
}
.task-search {
  width: 146px;
  height: 21px;
  box-sizing: border-box;
  border-radius: 11px;
  background: #f2f2f2;
  display: flex;
  align-items: center;
  gap: 5px;
  padding-left: 6px;
  font-size: 12px;
  color: #555;
}
.task-apps {
  display: flex;
  margin-left: 1px;
}
.app-slot {
  position: relative;
  width: 29.4px;
  height: 30px;
  display: flex;
  align-items: center;
  justify-content: center;
}
.app-slot svg {
  width: 18px;
  height: 18px;
}
.app-slot.chrome {
  background: #2c2c2e;
  border-radius: 4px;
}
.app-slot.chrome::after,
.app-slot.open::after {
  content: "";
  position: absolute;
  bottom: 1px;
  left: 50%;
  width: 3px;
  height: 2px;
  margin-left: -1.5px;
  background: #8a8a8a;
}
.app-slot.chrome::after {
  width: 10px;
  margin-left: -5px;
  background: #7fd8e6;
}
.tray {
  position: absolute;
  right: 11px;
  top: 0;
  height: 100%;
  display: flex;
  align-items: center;
  gap: 7px;
}
.tray .tight {
  margin-left: -6px;
}
.clock {
  margin: 0 -5px 0 2px;
  color: #e8e8e8;
  font-size: 8.2px;
  line-height: 12px;
  text-align: right;
  white-space: nowrap;
}
</style>
